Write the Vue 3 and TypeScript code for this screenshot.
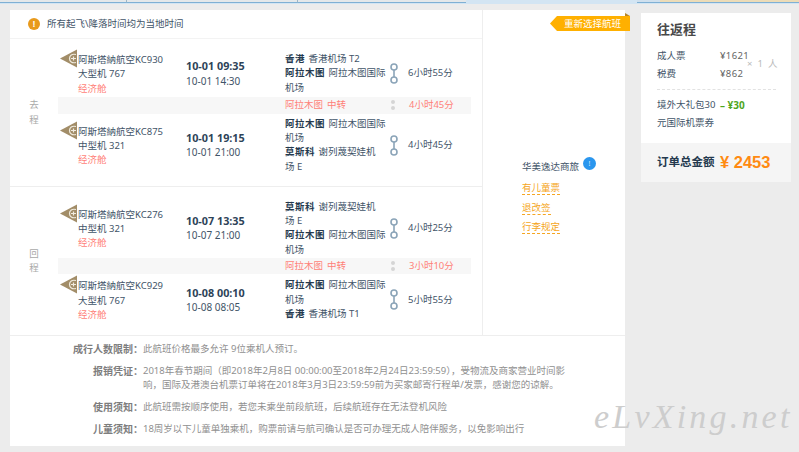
<script setup lang="ts">
interface Segment {
  flight: string
  plane: string
  dep: string
  arr: string
  from: [string, string[]]
  to: [string, string[]]
  duration: string
}
interface Leg {
  label: string[]
  first: Segment
  transfer: string
  second: Segment
}

const almaty: [string, string[]] = ['阿拉木图', ['阿拉木图国际', '机场']]
const moscow: [string, string[]] = ['莫斯科', ['谢列蔑契娃机', '场 E']]

const legs: Leg[] = [
  {
    label: ['去', '程'],
    first: {
      flight: '阿斯塔納航空KC930', plane: '大型机 767', dep: '10-01 09:35', arr: '10-01 14:30',
      from: ['香港', ['香港机场 T2']], to: almaty, duration: '6小时55分'
    },
    transfer: '4小时45分',
    second: {
      flight: '阿斯塔納航空KC875', plane: '中型机 321', dep: '10-01 19:15', arr: '10-01 21:00',
      from: almaty, to: moscow, duration: '4小时45分'
    }
  },
  {
    label: ['回', '程'],
    first: {
      flight: '阿斯塔納航空KC276', plane: '中型机 321', dep: '10-07 13:35', arr: '10-07 21:00',
      from: moscow, to: almaty, duration: '4小时25分'
    },
    transfer: '3小时10分',
    second: {
      flight: '阿斯塔納航空KC929', plane: '大型机 767', dep: '10-08 00:10', arr: '10-08 08:05',
      from: almaty, to: ['香港', ['香港机场 T1']], duration: '5小时55分'
    }
  }
]

const notes = [
  { k: '成行人数限制：', v: '此航班价格最多允许 9位乘机人预订。' },
  { k: '报销凭证：', v: '2018年春节期间（即2018年2月8日 00:00:00至2018年2月24日23:59:59），受物流及商家营业时间影响，国际及港澳台机票订单将在2018年3月3日23:59:59前为买家邮寄行程单/发票，感谢您的谅解。' },
  { k: '使用须知：', v: '此航班需按顺序使用，若您未乘坐前段航班，后续航班存在无法登机风险' },
  { k: '儿童须知：', v: '18周岁以下儿童单独乘机，购票前请与航司确认是否可办理无成人陪伴服务，以免影响出行' }
]

const links = ['有儿童票', '退改签', '行李规定']

function pair(leg: Leg): { seg: Segment; key: string }[] {
  return [
    { seg: leg.first, key: 'a' },
    { seg: leg.second, key: 'b' }
  ]
}
function ends(seg: Segment): { city: string; lines: string[]; key: string }[] {
  return [
    { city: seg.from[0], lines: seg.from[1], key: 'from' },
    { city: seg.to[0], lines: seg.to[1], key: 'to' }
  ]
}
</script>

<template>
  <div class="page">
    <div class="strip">
      <span class="tab t1"></span>
      <span class="tab t2"></span>
      <span class="tab t3"></span>
      <span class="tab t4"></span>
      <span class="tab t5"></span>
    </div>
    <div class="wrap">
      <section class="card">
        <div class="card-left">
          <div class="tip">
            <span class="tip-icon">!</span>
            <span>所有起飞\降落时间均为当地时间</span>
          </div>
          <div v-for="leg in legs" :key="leg.label[0]" class="leg">
            <div class="leg-label"><span v-for="c in leg.label" :key="c">{{ c }}</span></div>
            <div class="leg-body">
              <template v-for="p in pair(leg)" :key="p.key">
                <div class="seg">
                  <div class="flight">
                    <svg class="logo" width="18" height="19" viewBox="0 0 18 19">
                      <path d="M0 9.5 L17 0.5 V18.5 Z" fill="#a28d68" />
                      <path d="M16 5.5 C12 4.5 9.5 6.5 9.5 9.5 C9.5 12.5 12 14.5 16 13.5 M11 9.5 H16 M13.5 7.5 V11.5" stroke="#f1ecdf" stroke-width="1.2" fill="none" />
                    </svg>
                    <div class="flight-text">
                      <div>{{ p.seg.flight }}</div>
                      <div>{{ p.seg.plane }}</div>
                      <div class="red">经济舱</div>
                    </div>
                  </div>
                  <div class="times">
                    <div class="dep">{{ p.seg.dep }}</div>
                    <div>{{ p.seg.arr }}</div>
                  </div>
                  <div class="airports">
                    <template v-for="e in ends(p.seg)" :key="e.key">
                      <div class="ap-line"><b>{{ e.city }}</b><span>{{ e.lines[0] }}</span></div>
                      <div v-if="e.lines[1]" class="ap-line">{{ e.lines[1] }}</div>
                    </template>
                  </div>
                  <svg class="route" width="10" height="21" viewBox="0 0 10 21">
                    <circle cx="5" cy="4" r="3" fill="none" stroke="#8ba4b8" stroke-width="1.6" />
                    <circle cx="5" cy="17" r="3" fill="none" stroke="#8ba4b8" stroke-width="1.6" />
                    <path d="M5 7 V14" stroke="#8ba4b8" stroke-width="1.6" />
                  </svg>
                  <div class="dur">{{ p.seg.duration }}</div>
                </div>
                <div v-if="p.key === 'a'" class="transfer">
                  <span class="t-city">阿拉木图 中转</span>
                  <span class="t-dots"><i></i><i></i></span>
                  <span class="t-dur">{{ leg.transfer }}</span>
                </div>
              </template>
            </div>
          </div>
        </div>
        <aside class="card-right">
          <div class="agent">
            <span>华美逸达商旅</span>
            <span class="badge">!</span>
          </div>
          <a v-for="l in links" :key="l" class="link">{{ l }}</a>
        </aside>
        <div class="reselect">
          <span class="fold"></span>
          <span class="re-label">重新选择航班</span>
        </div>
        <div class="notes">
          <div v-for="n in notes" :key="n.k" class="note">
            <div class="note-k">{{ n.k }}</div>
            <div class="note-v">{{ n.v }}</div>
          </div>
        </div>
      </section>

      <aside class="side">
        <div class="side-body">
          <h3>往返程</h3>
          <div class="prices">
            <div class="price-row"><span class="p-name">成人票</span><span class="p-val">¥1621</span></div>
            <div class="price-row"><span class="p-name">税费</span><span class="p-val">¥862</span></div>
            <span class="mult">× 1 人</span>
          </div>
          <div class="gift">
            <span class="gift-name">境外大礼包30元国际机票券</span>
            <span class="gift-val">– ¥30</span>
          </div>
        </div>
        <div class="total">
          <span class="total-k">订单总金额</span>
          <span class="total-v">¥ 2453</span>
        </div>
      </aside>
    </div>
    <div class="mark">eLvXing.net</div>
  </div>
</template>

<style>
html, body { margin: 0; background: #ececec; }
</style>

<style scoped>
.page {
  position: relative;
  width: 799px;
  height: 452px;
  overflow: hidden;
  background: #ececec;
  font-family: "Noto Sans", "Noto Sans CJK SC", sans-serif;
  font-size: 9.5px;
  line-height: 14.33px;
  color: #3f5468;
}
.strip {
  display: flex;
  align-items: flex-start;
  height: 4px;
  background: #d3e5f3;
}
.tab {
  height: 2px;
  box-sizing: content-box;
  background: #e4e8ea;
  border-bottom: 1px solid #7fb0d4;
}
.t1 { width: 126px; border-right: 1px solid #9bb6c8; }
.t2 { width: 170px; border-right: 1px solid #9bb6c8; }
.t3 { width: 168px; margin-right: 171px; }
.t4 { width: 23px; background: #cfe0ee; }
.t5 { flex: 1; background: #ecdcb8; }
.wrap {
  display: flex;
  align-items: flex-start;
  gap: 16px;
  padding: 6px 0 0 10px;
}
.card {
  position: relative;
  width: 615px;
  height: 436px;
  background: #fff;
  display: grid;
  grid-template-columns: 473px 142px;
  grid-template-rows: 325px 111px;
}
.card-left { border-right: 1px solid #eee; }
.tip {
  display: flex;
  align-items: center;
  height: 29px;
  box-sizing: border-box;
  padding-left: 18px;
  gap: 7px;
  border-bottom: 1px solid #f3f3f3;
}
.tip-icon {
  width: 12px;
  height: 12px;
  border-radius: 50%;
  background: #e89a1c;
  color: #fff;
  font: bold 9px/12px "Liberation Sans", sans-serif;
  text-align: center;
}
.leg {
  display: flex;
  height: 148px;
  box-sizing: border-box;
  align-items: center;
  border-bottom: 1px solid #eee;
}
.leg:last-child { border-bottom: 0; }
.leg-label {
  width: 48px;
  display: flex;
  flex-direction: column;
  align-items: center;
  color: #a9a9a9;
}
.leg-body { flex: 1; min-width: 0; }
.seg {
  display: flex;
  align-items: center;
}
.flight {
  width: 128px;
  flex: none;
  display: flex;
  align-items: flex-start;
  margin-top: 1px;
}
.logo { margin: -3px 0 0 2px; flex: none; }
.flight-text { white-space: nowrap; margin-top: 1px; }
.red { color: #ff7f78; }
.times { width: 99px; flex: none; }
.dep { font-weight: 700; color: #2d4358; font-size: 10.8px; }
.times div + div { font-size: 10px; }
.airports { width: 102px; flex: none; }
.ap-line { white-space: nowrap; height: 14.33px; }
.airports b { color: #24394e; letter-spacing: 0.5px; margin-right: 3.5px; }
.route { flex: none; margin: 0 9px 0 2px; }
.dur { white-space: nowrap; }
.transfer {
  display: flex;
  align-items: center;
  height: 16.5px;
  margin: 1px 11px 3px 0;
  background: #f7f7f7;
  color: #ff7f78;
}
.t-city { margin-left: 227px; width: 106px; word-spacing: 1.5px; }
.t-dots {
  display: flex;
  flex-direction: column;
  gap: 2px;
  width: 18px;
}
.t-dots i {
  width: 4px;
  height: 4px;
  border-radius: 50%;
  background: #d5d5d5;
  display: block;
}
.card-right {
  display: flex;
  flex-direction: column;
  align-items: flex-start;
  padding: 150px 0 0 39px;
}
.agent {
  display: flex;
  align-items: center;
  gap: 4px;
  height: 14px;
  margin-bottom: 7px;
}
.badge {
  width: 13px;
  height: 13px;
  margin-top: -8px;
  border-radius: 50%;
  background: #2a96ee;
  color: #cfe7fb;
  font-size: 7px;
  line-height: 13px;
  text-align: center;
}
.link {
  color: #f5a623;
  border-bottom: 1px dashed #f5a623;
  line-height: 13px;
  margin-bottom: 5.5px;
}
.reselect {
  position: absolute;
  top: 6px;
  right: -5px;
  width: 80px;
  height: 15px;
}
.re-label {
  display: block;
  box-sizing: border-box;
  height: 15px;
  padding-left: 14px;
  background: #ffb000;
  color: #fff;
  line-height: 15px;
  clip-path: polygon(7px 0, 100% 0, 100% 100%, 7px 100%, 0 50%);
}
.fold {
  position: absolute;
  top: -3px;
  right: 0;
  width: 0;
  height: 0;
  border-bottom: 3px solid #b8862a;
  border-right: 5px solid transparent;
}
.notes {
  grid-column: 1 / -1;
  padding-top: 6px;
  border-top: 1px solid #eee;
  color: #909090;
}
.note {
  display: flex;
  margin-bottom: 7.7px;
}
.note-k {
  width: 133px;
  flex: none;
  text-align: right;
  font-size: 10px;
  font-weight: 700;
  color: #7d7d7d;
}
.note-v { width: 432px; }
.side { width: 150px; margin-top: 3px; background: #fff; }
.side-body { padding: 8px 15px 0 16px; height: 130px; box-sizing: border-box; }
h3 {
  margin: 0 0 9px;
  font-size: 13px;
  line-height: 17px;
  font-weight: 700;
  color: #484848;
}
.prices { position: relative; padding-bottom: 6px; border-bottom: 1px dashed #e2e2e2; }
.price-row { display: flex; line-height: 18px; }
.p-name { width: 63px; }
.p-val { color: #666; letter-spacing: 0.4px; }
.mult {
  position: absolute;
  left: 90px;
  top: 10px;
  color: #bbb;
  letter-spacing: 1.3px;
  white-space: nowrap;
}
.gift { display: flex; align-items: flex-start; margin-top: 6px; }
.gift-name { width: 59px; flex: none; margin-right: 4px; line-height: 18px; }
.gift-val { color: #4ea51d; font-size: 10px; font-weight: 700; line-height: 18px; white-space: nowrap; }
.total {
  height: 39px;
  background: #f5f5f5;
  display: flex;
  align-items: center;
  padding-left: 16px;
  gap: 5.5px;
}
.total-k { font-size: 11.5px; font-weight: 700; color: #24394e; }
.total-v {
  font: 700 16.5px "Liberation Sans", sans-serif;
  color: #ff8a12;
}
.mark {
  position: absolute;
  left: 594px;
  top: 395px;
  font: italic 34px/44px "Liberation Serif", serif;
  letter-spacing: 3.2px;
  color: #cdcdcd;
  white-space: nowrap;
}
</style>
